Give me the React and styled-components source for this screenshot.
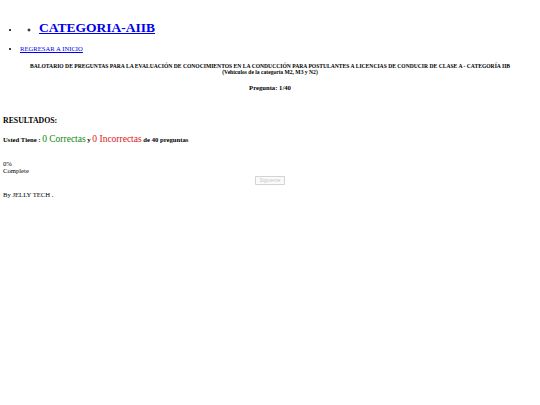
import styled, { createGlobalStyle } from "styled-components";

const GlobalStyle = createGlobalStyle`
  body {
    margin: 3px;
    font-family: "Liberation Serif", "Times New Roman", serif;
    font-size: 6.67px;
    color: #000;
    background: #fff;
  }
`;

const NavList = styled.ul`
  margin: 0;
  padding: 0 0 0 17px;
  list-style: disc;
`;

const SubList = styled.ul`
  margin: 0;
  padding: 0 0 0 19px;
  list-style: circle;
`;

const Brand = styled.h1`
  margin: 17px 0 9px;
  font-size: 13.5px;
  font-weight: bold;
`;

const NavLink = styled.a`
  color: #0000ee;
  text-decoration: underline;
`;

const Title = styled.h5`
  margin: 11px 0 0;
  font-size: 5.6px;
  font-weight: bold;
  text-align: center;
`;

const Question = styled.h4`
  margin: 9px 0 0;
  font-size: 6.67px;
  font-weight: bold;
  text-align: center;
`;

const Results = styled.h3`
  margin: 25px 0 0;
  font-size: 7.8px;
  font-weight: bold;
`;

const Summary = styled.h4`
  margin: 9px 0 0;
  font-size: 6.67px;
  font-weight: bold;
`;

const Count = styled.span`
  font-size: 9.5px;
  font-weight: normal;
  color: ${(p) => p.$color};
`;

const Progress = styled.div`
  margin-top: 16px;
`;

const Actions = styled.div`
  display: flex;
  justify-content: center;
  margin-top: 2px;
`;

const NextButton = styled.button`
  font-family: "Liberation Sans", Arial, sans-serif;
  font-size: 5px;
  padding: 1px 4px;
  height: 9px;
  line-height: 5px;
  border: 1px solid rgba(118, 118, 118, 0.3);
  border-radius: 1px;
  background: rgba(239, 239, 239, 0.3);
  color: rgba(16, 16, 16, 0.3);
`;

const Footer = styled.div`
  margin-top: 6px;
`;

export default function App() {
  return (
    <>
      <GlobalStyle />
      <NavList>
        <li>
          <SubList>
            <li>
              <Brand>
                <NavLink href="#">CATEGORIA-AIIB</NavLink>
              </Brand>
            </li>
          </SubList>
        </li>
        <li>
          <NavLink href="#">REGRESAR A INICIO</NavLink>
        </li>
      </NavList>
      <Title>
        BALOTARIO DE PREGUNTAS PARA LA EVALUACIÓN DE CONOCIMIENTOS EN LA
        CONDUCCIÓN PARA POSTULANTES A LICENCIAS DE CONDUCIR DE CLASE A -
        CATEGORÍA IIB
        <br />
        (Vehículos de la categoría M2, M3 y N2)
      </Title>
      <Question>Pregunta: 1/40</Question>
      <Results>RESULTADOS:</Results>
      <Summary>
        Usted Tiene : <Count $color="#0c880c">0 Correctas</Count> y{" "}
        <Count $color="#e01515">0 Incorrectas</Count> de 40 preguntas
      </Summary>
      <Progress>
        0%
        <br />
        Complete
      </Progress>
      <Actions>
        <NextButton disabled>Siguiente</NextButton>
      </Actions>
      <Footer>By JELLY TECH .</Footer>
    </>
  );
}
